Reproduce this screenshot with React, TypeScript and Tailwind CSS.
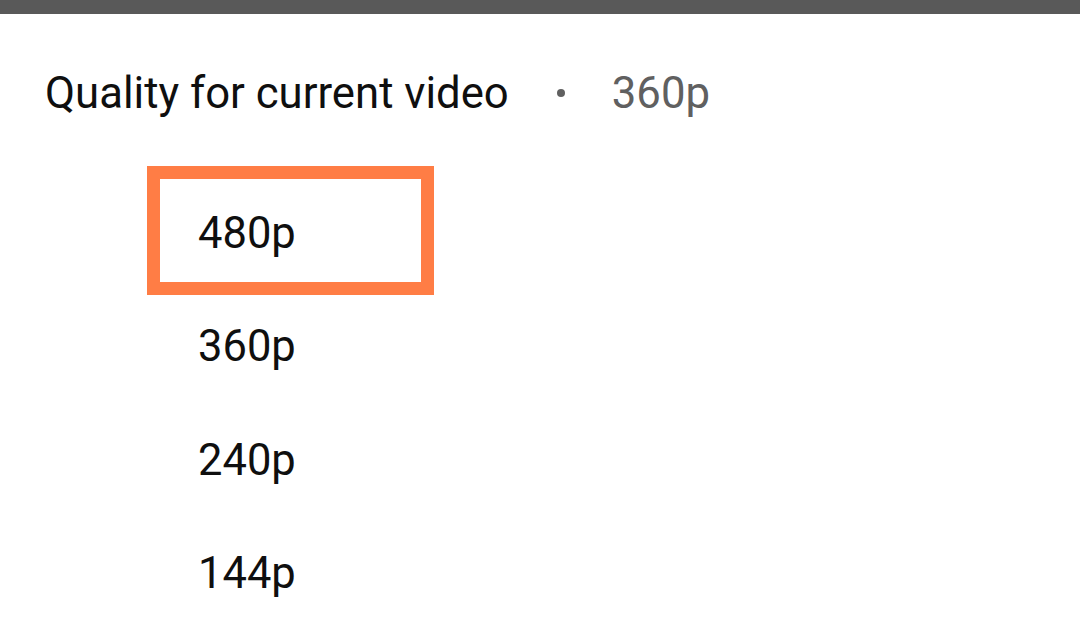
import React from "react";

const qualities = ["480p", "360p", "240p", "144p"];

export default function App() {
  return (
    <div className="w-[1080px] h-[620px] overflow-hidden bg-white font-['Roboto',sans-serif] text-[#0f0f0f]">
      <div className="h-[14px] bg-[#595959]" />

      <div className="pl-[45px] pt-[54px]">
        <div className="flex items-center text-[43.7px] leading-[50px]">
          <span>Quality for current video</span>
          <span className="ml-[48px] mr-[47px] w-[8px] h-[8px] rounded-full bg-[#606060]" />
          <span className="text-[#606060]">360p</span>
        </div>

        <ul className="mt-[59px] ml-[153px]">
          {qualities.map((q, i) => (
            <li
              key={q}
              className="relative flex items-center h-[113.5px] text-[43.5px] leading-[50px]"
            >
              {i === 0 && (
                <div className="absolute left-[-51px] top-[-11.5px] w-[287px] h-[129px] border-[13px] border-[#ff7d45]" />
              )}
              <span className="relative">{q}</span>
            </li>
          ))}
        </ul>
      </div>
    </div>
  );
}
